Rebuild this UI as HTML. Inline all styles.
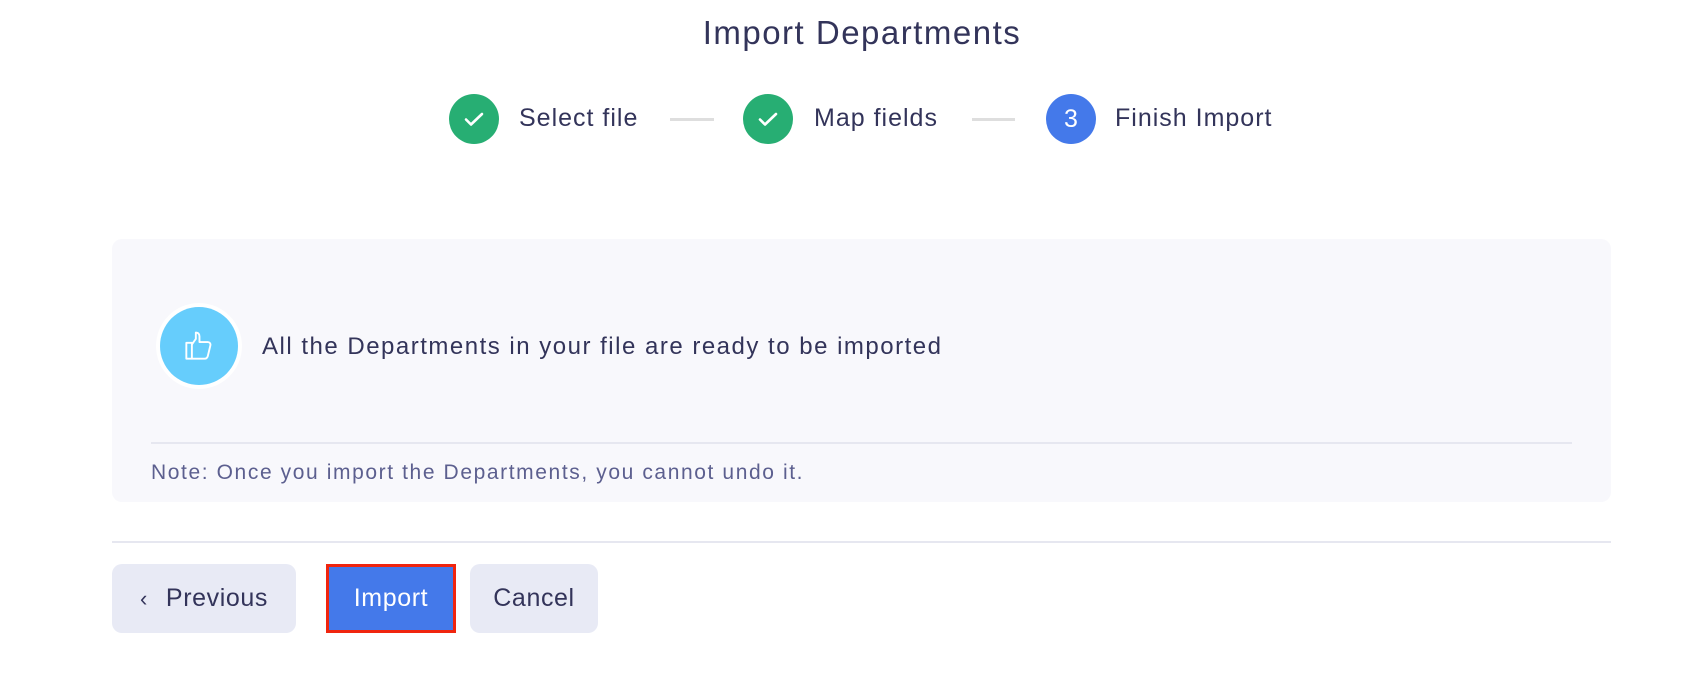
<!DOCTYPE html>
<html><head><style>
body{margin:0;width:1706px;height:676px;background:#fff;font-family:"Liberation Sans",sans-serif;color:#33345a;position:relative;overflow:hidden}
.a{position:absolute}
.title{left:0;width:1724px;top:14px;text-align:center;font-size:33px;letter-spacing:1.5px}
.circ{width:50px;height:50px;border-radius:50%;top:94px;display:flex;align-items:center;justify-content:center;color:#fff;font-size:25px}
.lbl{top:104px;font-size:25px;letter-spacing:1px}
.ln{top:118px;height:3px;background:#dedede}
.btn{top:564px;height:69px;border-radius:10px;background:#e8eaf5;font-size:25px;display:flex;align-items:center;justify-content:center;box-sizing:border-box;letter-spacing:0.6px}
</style></head><body>
<div class="a title">Import Departments</div>
<div class="a circ" style="left:449px;background:#27ae73"><svg width="24" height="24" viewBox="0 0 24 24"><path d="M4 12.5l5 5L20 7" fill="none" stroke="#fff" stroke-width="2.6" stroke-linecap="round" stroke-linejoin="round"/></svg></div>
<div class="a lbl" style="left:519px">Select file</div>
<div class="a ln" style="left:670px;width:44px"></div>
<div class="a circ" style="left:743px;background:#27ae73"><svg width="24" height="24" viewBox="0 0 24 24"><path d="M4 12.5l5 5L20 7" fill="none" stroke="#fff" stroke-width="2.6" stroke-linecap="round" stroke-linejoin="round"/></svg></div>
<div class="a lbl" style="left:814px">Map fields</div>
<div class="a ln" style="left:972px;width:43px"></div>
<div class="a circ" style="left:1046px;background:#4479ea">3</div>
<div class="a lbl" style="left:1115px">Finish Import</div>

<div class="a" style="left:112px;top:239px;width:1499px;height:263px;background:#f8f8fc;border-radius:10px"></div>
<div class="a" style="left:156px;top:303px;width:86px;height:86px;border-radius:50%;background:#fff"></div>
<div class="a" style="left:160px;top:307px;width:78px;height:78px;border-radius:50%;background:#66cdfc;display:flex;align-items:center;justify-content:center">
<svg width="38" height="38" viewBox="0 0 24 24" fill="none" stroke="#fff" stroke-width="1.2" stroke-linejoin="round"><rect x="4" y="10" width="3.5" height="10"/><path d="M7.5 11l2.5-3.5V3.5c1.5 0 2.3 1 2.3 2.5V9.5h5.2c1.2 0 2 1 1.7 2.1l-1.6 6.6c-.3 1.1-1 1.8-2.1 1.8H7.5"/></svg></div>
<div class="a" style="left:262px;top:333px;font-size:24px;letter-spacing:1.5px">All the Departments in your file are ready to be imported</div>
<div class="a" style="left:151px;top:442px;width:1421px;height:2px;background:#e6e7f0"></div>
<div class="a" style="left:151px;top:461px;font-size:21px;color:#5c5f8f;letter-spacing:1.6px">Note: Once you import the Departments, you cannot undo it.</div>
<div class="a" style="left:112px;top:541px;width:1499px;height:2px;background:#e6e7f0"></div>

<div class="a btn" style="left:112px;width:184px"><span style="font-size:22px;margin-right:18px">‹</span>Previous</div>
<div class="a btn" style="left:326px;width:130px;border-radius:0;background:#4479ea;color:#fff;border:3px solid #f0250f">Import</div>
<div class="a btn" style="left:470px;width:128px">Cancel</div>
</body></html>
